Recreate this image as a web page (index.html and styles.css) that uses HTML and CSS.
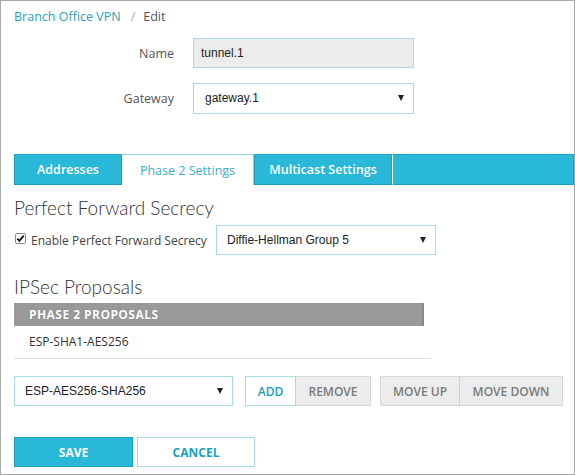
FILE: index.html
```html
<!DOCTYPE html>
<html>
<head>
<meta charset="utf-8">
<link rel="stylesheet" href="styles.css">
</head>
<body>
<div class="page">
  <div class="crumbs">
    <span class="crumb-link">Branch Office VPN</span>
    <span class="crumb-sep">/</span>
    <span class="crumb-cur">Edit</span>
  </div>

  <div class="form">
    <div class="form-row">
      <span class="label">Name</span>
      <div class="field field-ro">tunnel.1</div>
    </div>
    <div class="form-row">
      <span class="label">Gateway</span>
      <div class="field select select-gw"><span>gateway.1</span><span class="caret"></span></div>
    </div>
  </div>

  <div class="tabs">
    <div class="tab tab-addr">Addresses</div>
    <div class="tab tab-active tab-p2">Phase 2 Settings</div>
    <div class="tab tab-mc">Multicast Settings</div>
    <div class="tab-fill"></div>
  </div>

  <h2 class="heading h-pfs">Perfect Forward Secrecy</h2>
  <div class="pfs-row">
    <label class="check">
      <svg class="checkbox" width="11" height="11" viewBox="0 0 11 11">
        <rect x="0.5" y="0.5" width="10" height="10" rx="1.5" fill="#fff" stroke="#8a8a8a"/>
        <path d="M2.3 5.6 L4.4 7.9 L8.7 2.6" fill="none" stroke="#111" stroke-width="1.8"/>
      </svg>
      <span>Enable Perfect Forward Secrecy</span>
    </label>
    <div class="field select select-dh"><span>Diffie-Hellman Group 5</span><span class="caret"></span></div>
  </div>

  <h2 class="heading h-ipsec">IPSec Proposals</h2>
  <div class="table">
    <div class="table-head">PHASE 2 PROPOSALS</div>
    <div class="table-row">ESP-SHA1-AES256</div>
  </div>

  <div class="actions">
    <div class="field select select-prop"><span>ESP-AES256-SHA256</span><span class="caret"></span></div>
    <div class="btn-group">
      <button class="btn btn-add">ADD</button>
      <button class="btn btn-gray btn-remove">REMOVE</button>
    </div>
    <div class="btn-group">
      <button class="btn btn-gray btn-up">MOVE UP</button>
      <button class="btn btn-gray btn-down">MOVE DOWN</button>
    </div>
  </div>

  <div class="footer">
    <button class="btn btn-save">SAVE</button>
    <button class="btn btn-cancel">CANCEL</button>
  </div>
</div>
</body>
</html>
```

FILE: styles.css
```css
* { box-sizing: border-box; }
html, body { margin: 0; padding: 0; background: #fff; }
body { font-family: "Open Sans", "Noto Sans", sans-serif; color: #444; }

.page {
  width: 575px;
  height: 475px;
  border: 1px solid #a8a8a8;
  padding: 6px 0 0 13px;
  overflow: hidden;
}

.crumbs {
  height: 19px;
  line-height: 19px;
  font-size: 12.5px;
  display: flex;
}
.crumb-link { color: #2aa3b8; }
.crumb-sep { color: #aaa; margin: 0 8px 0 10px; }
.crumb-cur { color: #555; }

.form { margin-top: 12px; display: flex; flex-direction: column; gap: 15px; }
.form-row { display: flex; align-items: center; height: 30px; }
.label {
  width: 160px;
  text-align: right;
  font-size: 12.5px;
  color: #555;
  margin-right: 19px;
}

.field {
  height: 30px;
  border: 1px solid #a7dbe3;
  background: #fff;
  font-family: "Liberation Sans", Arial, sans-serif;
  font-size: 12px;
  color: #222;
  display: flex;
  align-items: center;
  padding-left: 7px;
}
.field-ro { width: 221px; background: #ececec; }
.select { justify-content: space-between; padding-right: 9px; }
.select-gw { width: 221px; padding-left: 11px; height: 31px; }
.caret {
  width: 0; height: 0;
  border-left: 3.5px solid transparent;
  border-right: 3.5px solid transparent;
  border-top: 6px solid #222;
}

.tabs {
  margin-top: 41px;
  display: flex;
  height: 31px;
  font-size: 12.5px;
}
.tab {
  height: 31px;
  display: flex;
  align-items: center;
  justify-content: center;
  background: #29b8d8;
  color: #fff;
  font-weight: 600;
  border: 1px solid #1a9fc0;
  border-top-color: #2aa6c2;
}
.tab-addr { width: 108px; }
.tab-p2 { width: 132px; }
.tab-mc { width: 138px; }
.tab-active {
  background: #fff;
  color: #3aaec9;
  font-weight: 400;
  border: 1px solid #8fd3e2;
  border-bottom: none;
  border-left: none;
}
.tab-fill {
  flex: 1;
  height: 31px;
  background: #29b8d8;
  border: 1px solid #1a9fc0;
  border-left: 1px solid #fff;
}

.heading {
  font-family: Lato, "Open Sans", sans-serif;
  font-weight: 300;
  font-size: 19px;
  line-height: 24px;
  height: 24px;
  margin: 0;
  color: #333;
}
.h-pfs { margin-top: 11px; }
.h-ipsec { margin-top: 20px; }

.pfs-row { margin-top: 5px; display: flex; align-items: center; height: 30px; }
.check { display: flex; align-items: center; width: 202px; font-size: 12px; color: #444; }
.checkbox { margin: 0 5px 0 1px; position: relative; top: -2px; }
.select-dh { width: 220px; padding-left: 10px; }

.table { margin-top: 4px; width: 417px; }
.table-head {
  width: 410px;
  height: 23px;
  background: #999;
  border-right: 2px solid #888;
  color: #fff;
  font-weight: 700;
  font-size: 12px;
  letter-spacing: 0.45px;
  line-height: 23px;
  padding-left: 15px;
  text-shadow: 0 0 1px rgba(0,0,0,0.25);
}
.table-row {
  height: 33px;
  border-bottom: 1px solid #ddd;
  font-size: 12px;
  line-height: 32px;
  color: #333;
  padding-left: 15px;
}

.actions { margin-top: 17px; display: flex; height: 30px; }
.select-prop { width: 219px; padding-left: 10px; }
.btn-group { display: flex; margin-left: 12px; }
.btn-group + .btn-group { margin-left: 9px; }
.btn {
  font-family: "Open Sans", "Noto Sans", sans-serif;
  font-weight: 600;
  font-size: 12px;
  height: 30px;
  padding: 0;
  border: 1px solid #d8d8d8;
  background: #ececec;
  color: #7a7a7a;
  cursor: pointer;
}
.btn-add { width: 51px; background: #fff; color: #1aa0c2; border-color: #a7dbe3; }
.btn-remove { width: 75px; border-left: none; }
.btn-up { width: 80px; }
.btn-down { width: 104px; border-left: 1px solid #d0d0d0; margin-left: -1px; }

.footer { margin-top: 31px; display: flex; gap: 4px; }
.btn-save {
  width: 119px;
  background: #29b8d8;
  border: 1px solid #1a9fc0;
  color: #fff;
  font-weight: 700;
}
.btn-cancel {
  width: 118px;
  background: #fff;
  border: 1px solid #a7dbe3;
  color: #1a9fc0;
  font-weight: 700;
}
```
